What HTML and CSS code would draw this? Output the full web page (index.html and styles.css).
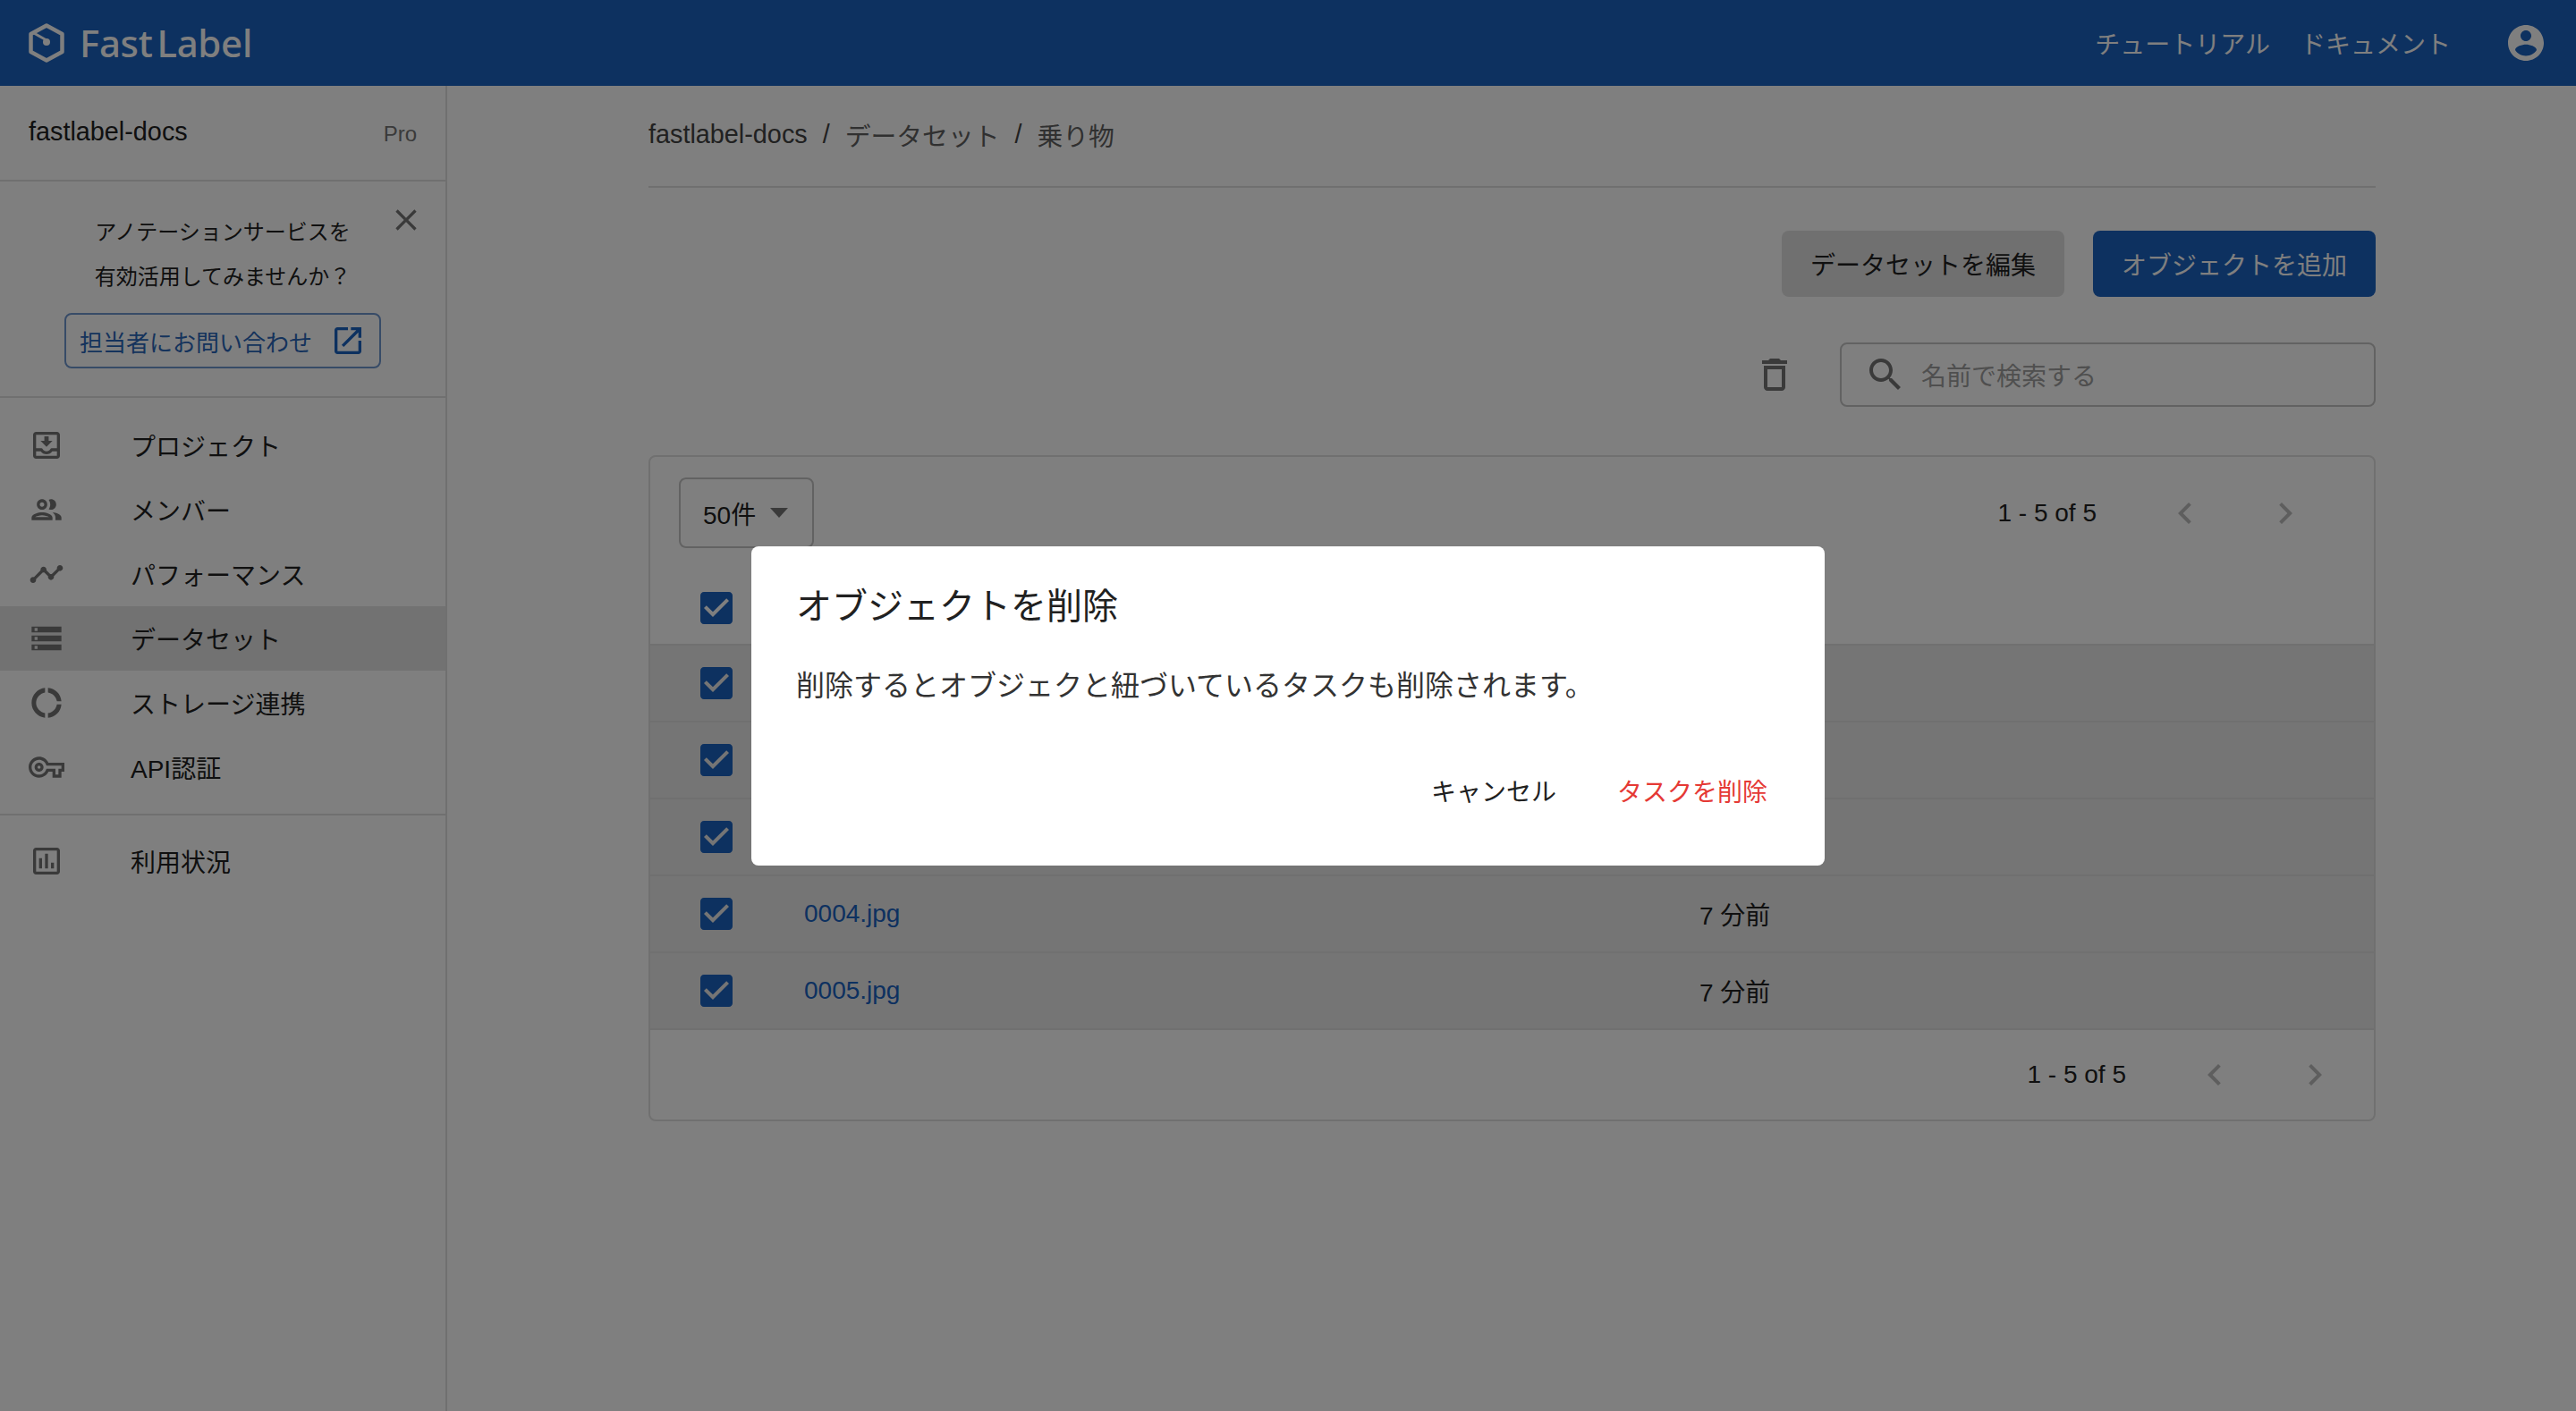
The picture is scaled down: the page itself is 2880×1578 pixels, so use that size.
FILE: index.html
```html
<!DOCTYPE html>
<html lang="ja">

<head>
    <meta charset="UTF-8">
    <meta name="viewport" content="width=device-width, initial-scale=1.0">
    <title>FastLabel</title>
    <link rel="stylesheet" href="styles.css">
</head>

<body>
    <div class="header">
        <div class="logo">
            <svg class="logo-mark" viewBox="0 0 40 44">
                <path d="M20 2.5 37.5 12v20L20 41.5 2.500 32V12z" fill="none" stroke="#fff" stroke-width="4.500" stroke-linejoin="round"/>
                <path d="M5 10.500 20 19" fill="none" stroke="#fff" stroke-width="3"/>
                <circle cx="20" cy="21" r="4" fill="#fff"/>
            </svg>
            <span class="logo-text">Fast<span class="logo-gap">Label</span></span>
        </div>
        <div class="header-right">
            <a class="header-link" href="#">チュートリアル</a>
            <a class="header-link" href="#">ドキュメント</a>
            <svg class="icon-avatar" viewBox="0 0 24 24"><path d="M12 2C6.48 2 2 6.48 2 12s4.48 10 10 10 10-4.48 10-10S17.52 2 12 2zm0 3c1.66 0 3 1.34 3 3s-1.34 3-3 3-3-1.34-3-3 1.34-3 3-3zm0 14.2c-2.5 0-4.71-1.28-6-3.22.03-1.99 4-3.08 6-3.08 1.99 0 5.97 1.09 6 3.08-1.29 1.94-3.5 3.22-6 3.22z"/></svg>
        </div>
    </div>

    <div class="main">
        <div class="sidebar">
            <div class="team">
                <span class="team-name">fastlabel-docs</span>
                <span class="team-plan">Pro</span>
            </div>

            <div class="promo">
                <svg class="promo-close" viewBox="0 0 24 24"><path d="M19 6.410 17.590 5 12 10.590 6.410 5 5 6.410 10.590 12 5 17.590 6.410 19 12 13.410 17.590 19 19 17.590 13.410 12z"/></svg>
                <p class="promo-text">アノテーションサービスを</p>
                <p class="promo-text">有効活用してみませんか？</p>
                <a class="promo-button" href="#">
                    担当者にお問い合わせ
                    <svg class="icon" viewBox="0 0 24 24"><path d="M19 19H5V5h7V3H5c-1.110 0-2 .9-2 2v14c0 1.100.89 2 2 2h14c1.100 0 2-.9 2-2v-7h-2v7zM14 3v2h3.590l-9.830 9.830 1.410 1.410L19 6.410V10h2V3h-7z"/></svg>
                </a>
            </div>

            <div class="nav">
                <a class="nav-item" href="#">
                    <svg class="icon" viewBox="0 0 24 24"><path fill-rule="evenodd" d="M19 3H5c-1.100 0-2 .9-2 2v14c0 1.100.9 2 2 2h14c1.100 0 2-.9 2-2V5c0-1.100-.9-2-2-2zm0 11h-3.560c-.36 0-.68.19-.86.5-.52.9-1.470 1.500-2.580 1.500s-2.060-.6-2.580-1.500c-.18-.31-.5-.5-.86-.5H5V5h14v9zM5 19v-3h3.100c.7 1.200 2.400 2 3.900 2s3.200-.8 3.900-2H19v3H5z"/><path d="M16 9h-2.550V6h-2.900v3H8l4 4z"/></svg>
                    プロジェクト
                </a>
                <a class="nav-item" href="#">
                    <svg class="icon" viewBox="0 0 24 24"><path d="M9 13.750c-2.340 0-7 1.170-7 3.500V19h14v-1.750c0-2.330-4.660-3.500-7-3.500zM4.340 17c.84-.58 2.870-1.250 4.660-1.250s3.820.67 4.660 1.250H4.340zM9 12c1.930 0 3.500-1.570 3.500-3.500S10.930 5 9 5 5.500 6.570 5.500 8.500 7.070 12 9 12zm0-5c.83 0 1.500.67 1.500 1.500S9.830 10 9 10s-1.500-.67-1.500-1.500S8.170 7 9 7zm7.040 6.810c1.160.84 1.960 1.960 1.960 3.440V19h4v-1.750c0-2.020-3.500-3.170-5.960-3.440zM15 12c1.930 0 3.500-1.570 3.500-3.500S16.930 5 15 5c-.54 0-1.040.13-1.500.35.63.89 1 1.980 1 3.150s-.37 2.260-1 3.150c.46.22.96.35 1.500.35z"/></svg>
                    メンバー
                </a>
                <a class="nav-item" href="#">
                    <svg class="icon" viewBox="0 0 24 24"><path d="M23 8c0 1.100-.9 2-2 2-.18 0-.35-.02-.51-.07l-3.560 3.550c.05.16.07.34.07.52 0 1.100-.9 2-2 2s-2-.9-2-2c0-.18.02-.36.07-.52l-2.550-2.550c-.16.05-.34.07-.52.07s-.36-.02-.52-.07l-4.550 4.560c.05.16.07.33.07.51 0 1.100-.9 2-2 2s-2-.9-2-2 .9-2 2-2c.18 0 .35.02.51.07l4.560-4.550C8.020 9.360 8 9.180 8 9c0-1.100.9-2 2-2s2 .9 2 2c0 .18-.02.36-.07.52l2.550 2.550c.16-.05.34-.07.52-.07s.36.02.52.07l3.550-3.560C19.020 8.350 19 8.180 19 8c0-1.100.9-2 2-2s2 .9 2 2z"/></svg>
                    パフォーマンス
                </a>
                <a class="nav-item active" href="#">
                    <svg class="icon" viewBox="0 0 24 24"><path d="M2 20h20v-4H2v4zm2-3h2v2H4v-2zM2 4v4h20V4H2zm4 3H4V5h2v2zm-4 7h20v-4H2v4zm2-3h2v2H4v-2z"/></svg>
                    データセット
                </a>
                <a class="nav-item" href="#">
                    <svg class="icon" viewBox="0 0 24 24"><path d="M11 5.080V2c-5 .5-9 4.810-9 10s4 9.500 9 10v-3.080c-3-.48-6-3.400-6-6.920s3-6.440 6-6.920zM18.970 11H22c-.47-5-4-8.530-9-9v3.080C16 5.510 18.540 8 18.970 11zM13 18.920V22c5-.47 8.530-4 9-9h-3.030c-.43 3-2.970 5.490-5.970 5.920z"/></svg>
                    ストレージ連携
                </a>
                <a class="nav-item" href="#">
                    <svg class="icon" viewBox="0 0 24 24"><path d="M22 19h-6v-4h-2.680c-1.140 2.420-3.600 4-6.320 4-3.860 0-7-3.140-7-7s3.140-7 7-7c2.720 0 5.170 1.580 6.320 4H24v6h-2v4zm-4-2h2v-4h2v-2H11.940l-.23-.67C11.010 8.340 9.110 7 7 7c-2.760 0-5 2.240-5 5s2.240 5 5 5c2.110 0 4.010-1.340 4.710-3.330l.23-.67H18v4zM7 15c-1.650 0-3-1.350-3-3s1.350-3 3-3 3 1.350 3 3-1.350 3-3 3zm0-4c-.55 0-1 .45-1 1s.45 1 1 1 1-.45 1-1-.45-1-1-1z"/></svg>
                    API認証
                </a>
            </div>

            <div class="nav nav-last">
                <a class="nav-item" href="#">
                    <svg class="icon" viewBox="0 0 24 24"><path d="M19 3H5c-1.100 0-2 .9-2 2v14c0 1.100.9 2 2 2h14c1.100 0 2-.9 2-2V5c0-1.100-.9-2-2-2zm0 16H5V5h14v14zM7 10h2v7H7zm4-3h2v10h-2zm4 6h2v4h-2z"/></svg>
                    利用状況
                </a>
            </div>
        </div>

        <div class="content">
            <div class="breadcrumb">
                <span>fastlabel-docs</span>
                <span class="crumb-sep">/</span>
                <span class="crumb">データセット</span>
                <span class="crumb-sep">/</span>
                <span class="crumb">乗り物</span>
            </div>

            <div class="actions">
                <button class="button">データセットを編集</button>
                <button class="button button-primary">オブジェクトを追加</button>
            </div>

            <div class="search-row">
                <svg class="icon-large" viewBox="0 0 24 24"><path d="M6 19c0 1.100.9 2 2 2h8c1.100 0 2-.9 2-2V7H6v12zM8 9h8v10H8V9zm7.500-5l-1-1h-5l-1 1H5v2h14V4z"/></svg>
                <div class="search">
                    <svg class="icon-large" viewBox="0 0 24 24"><path d="M15.500 14h-.79l-.28-.27C15.410 12.590 16 11.110 16 9.500 16 5.910 13.090 3 9.500 3S3 5.910 3 9.500 5.910 16 9.500 16c1.610 0 3.090-.59 4.230-1.570l.27.28v.79l5 4.990L20.490 19l-4.990-5zm-6 0C7.010 14 5 11.990 5 9.500S7.010 5 9.500 5 14 7.010 14 9.500 11.990 14 9.500 14z"/></svg>
                    <span class="search-placeholder">名前で検索する</span>
                </div>
            </div>

            <div class="card">
                <div class="card-top">
                    <div class="select">50件<span class="select-arrow"></span></div>
                    <div class="pager pager-top">
                        <span>1 - 5 of 5</span>
                        <div class="pager-buttons">
                            <svg class="icon-large" viewBox="0 0 24 24"><path d="M15.410 7.410 14 6l-6 6 6 6 1.410-1.410L10.830 12z"/></svg>
                            <svg class="icon-large" viewBox="0 0 24 24"><path d="M10 6 8.590 7.410 13.170 12l-4.580 4.590L10 18l6-6z"/></svg>
                        </div>
                    </div>
                </div>

                <div class="row row-head">
                    <svg class="check" viewBox="0 0 24 24"><path d="M19 3H5c-1.110 0-2 .9-2 2v14c0 1.100.89 2 2 2h14c1.110 0 2-.89 2-2V5c0-1.100-.89-2-2-2zm-9 14l-5-5 1.410-1.410L10 14.170l7.590-7.590L19 8l-9 9z"/></svg>
                </div>
                <div class="row">
                    <svg class="check" viewBox="0 0 24 24"><path d="M19 3H5c-1.110 0-2 .9-2 2v14c0 1.100.89 2 2 2h14c1.110 0 2-.89 2-2V5c0-1.100-.89-2-2-2zm-9 14l-5-5 1.410-1.410L10 14.170l7.590-7.590L19 8l-9 9z"/></svg>
                    <a class="file-name" href="#">0001.jpg</a>
                    <span>7 分前</span>
                </div>
                <div class="row">
                    <svg class="check" viewBox="0 0 24 24"><path d="M19 3H5c-1.110 0-2 .9-2 2v14c0 1.100.89 2 2 2h14c1.110 0 2-.89 2-2V5c0-1.100-.89-2-2-2zm-9 14l-5-5 1.410-1.410L10 14.170l7.590-7.590L19 8l-9 9z"/></svg>
                    <a class="file-name" href="#">0002.jpg</a>
                    <span>7 分前</span>
                </div>
                <div class="row">
                    <svg class="check" viewBox="0 0 24 24"><path d="M19 3H5c-1.110 0-2 .9-2 2v14c0 1.100.89 2 2 2h14c1.110 0 2-.89 2-2V5c0-1.100-.89-2-2-2zm-9 14l-5-5 1.410-1.410L10 14.170l7.590-7.590L19 8l-9 9z"/></svg>
                    <a class="file-name" href="#">0003.jpg</a>
                    <span>7 分前</span>
                </div>
                <div class="row">
                    <svg class="check" viewBox="0 0 24 24"><path d="M19 3H5c-1.110 0-2 .9-2 2v14c0 1.100.89 2 2 2h14c1.110 0 2-.89 2-2V5c0-1.100-.89-2-2-2zm-9 14l-5-5 1.410-1.410L10 14.170l7.590-7.590L19 8l-9 9z"/></svg>
                    <a class="file-name" href="#">0004.jpg</a>
                    <span>7 分前</span>
                </div>
                <div class="row">
                    <svg class="check" viewBox="0 0 24 24"><path d="M19 3H5c-1.110 0-2 .9-2 2v14c0 1.100.89 2 2 2h14c1.110 0 2-.89 2-2V5c0-1.100-.89-2-2-2zm-9 14l-5-5 1.410-1.410L10 14.170l7.590-7.590L19 8l-9 9z"/></svg>
                    <a class="file-name" href="#">0005.jpg</a>
                    <span>7 分前</span>
                </div>

                <div class="card-bottom">
                    <div class="pager pager-bottom">
                        <span>1 - 5 of 5</span>
                        <div class="pager-buttons">
                            <svg class="icon-large" viewBox="0 0 24 24"><path d="M15.410 7.410 14 6l-6 6 6 6 1.410-1.410L10.830 12z"/></svg>
                            <svg class="icon-large" viewBox="0 0 24 24"><path d="M10 6 8.590 7.410 13.170 12l-4.580 4.590L10 18l6-6z"/></svg>
                        </div>
                    </div>
                </div>
            </div>
        </div>
    </div>

    <div class="overlay">
        <div class="dialog">
            <h2 class="dialog-title">オブジェクトを削除</h2>
            <p class="dialog-text">削除するとオブジェクと紐づいているタスクも削除されます。</p>
            <div class="dialog-actions">
                <button class="dialog-button">キャンセル</button>
                <button class="dialog-button dialog-danger">タスクを削除</button>
            </div>
        </div>
    </div>
</body>

</html>
```

FILE: styles.css
```css
/* Global styles */
body {
    margin: 0;
    font-family: "Liberation Sans", "Noto Sans CJK JP", sans-serif;
    font-size: 28px;
    color: #212121;
    background-color: #fff;
}

a {
    color: inherit;
    text-decoration: none;
}

.icon {
    width: 40px;
    height: 40px;
    flex: none;
    fill: #757575;
}

.icon-large {
    width: 48px;
    height: 48px;
    flex: none;
    fill: #757575;
}

/* Header */
.header {
    height: 96px;
    padding: 0 32px;
    box-sizing: border-box;
    display: flex;
    align-items: center;
    justify-content: space-between;
    background-color: #1a62c0;
    color: #fff;
}

.logo {
    display: flex;
    align-items: center;
    gap: 17px;
}

.logo-mark {
    width: 40px;
    height: 44px;
}

.logo-text {
    font-family: "Noto Sans", sans-serif;
    font-weight: 500;
    font-size: 42px;
    line-height: 1;
    letter-spacing: -0.3px;
}

.logo-gap {
    margin-left: 5px;
}

.header-right {
    display: flex;
    align-items: center;
    gap: 34px;
}

.header-link {
    font-size: 28px;
}

.icon-avatar {
    width: 48px;
    height: 48px;
    margin-left: 26px;
    fill: #fff;
}

/* Sidebar */
.main {
    display: flex;
    min-height: 1482px;
}

.sidebar {
    width: 500px;
    flex: none;
    box-sizing: border-box;
    border-right: 2px solid #e0e0e0;
}

.team {
    height: 107px;
    box-sizing: border-box;
    padding: 0 32px 2px;
    display: flex;
    align-items: center;
    justify-content: space-between;
    border-bottom: 2px solid #e0e0e0;
}

.team-name {
    font-size: 28.800px;
}

.team-plan {
    font-size: 24px;
    color: #757575;
    margin-top: 4px;
}

.promo {
    position: relative;
    height: 242px;
    box-sizing: border-box;
    padding-top: 32px;
    display: flex;
    flex-direction: column;
    align-items: center;
    border-bottom: 2px solid #e0e0e0;
}

.promo-close {
    position: absolute;
    top: 23px;
    right: 24px;
    width: 40px;
    height: 40px;
    fill: #757575;
}

.promo-text {
    margin: 0;
    font-size: 24px;
    line-height: 50px;
}

.promo-button {
    margin-top: 15px;
    width: 354px;
    height: 62px;
    box-sizing: border-box;
    display: flex;
    align-items: center;
    justify-content: center;
    gap: 20px;
    font-size: 26px;
    color: #2a66b8;
    border: 2px solid #6f97cf;
    border-radius: 8px;
}

.promo-button .icon {
    fill: #1a62c0;
}

.nav {
    padding: 17px 0 16px;
    border-bottom: 2px solid #e0e0e0;
}

.nav-last {
    padding-top: 15px;
    border-bottom: none;
}

.nav-item {
    height: 72px;
    padding-left: 32px;
    display: flex;
    align-items: center;
    gap: 74px;
    font-size: 28px;
}

.nav-item.active {
    background-color: #e4e4e4;
}

/* Content */
.content {
    flex: 1;
    padding: 0 224px 0 225px;
}

.breadcrumb {
    height: 114px;
    box-sizing: border-box;
    padding-bottom: 4px;
    display: flex;
    align-items: center;
    gap: 17px;
    font-size: 28.800px;
    border-bottom: 2px solid #e0e0e0;
    color: #424242;
}

.crumb {
    color: #616161;
}

.actions {
    margin-top: 48px;
    display: flex;
    justify-content: flex-end;
    gap: 32px;
}

.button {
    width: 316px;
    height: 74px;
    padding: 0;
    border: none;
    border-radius: 8px;
    font-family: inherit;
    font-size: 28px;
    color: #212121;
    background-color: #e0e0e0;
}

.button-primary {
    background-color: #1a62c0;
    color: #fff;
}

.search-row {
    margin-top: 51px;
    display: flex;
    align-items: center;
    justify-content: flex-end;
    gap: 49px;
}

.search {
    width: 599px;
    height: 72px;
    box-sizing: border-box;
    padding-left: 25px;
    display: flex;
    align-items: center;
    gap: 16px;
    border: 2px solid #c4c4c4;
    border-radius: 8px;
}

.search-placeholder {
    color: #9e9e9e;
}

/* Table card */
.card {
    margin-top: 54px;
    border: 2px solid #e0e0e0;
    border-radius: 8px;
}

.card-top {
    height: 102px;
    padding: 23px 0 0 32px;
    box-sizing: border-box;
    display: flex;
    justify-content: space-between;
}

.select {
    width: 151px;
    height: 79px;
    box-sizing: border-box;
    padding-left: 25px;
    display: flex;
    align-items: center;
    gap: 16px;
    background-color: #fff;
    border: 2px solid #c4c4c4;
    border-radius: 8px;
}

.select-arrow {
    border-left: 10.500px solid transparent;
    border-right: 10.500px solid transparent;
    border-top: 11px solid #757575;
}

.pager {
    display: flex;
    align-items: center;
    gap: 75px;
}

.pager-top {
    height: 79px;
    padding-right: 75px;
}

.pager-buttons {
    display: flex;
    gap: 64px;
}

.pager .icon-large {
    fill: #bdbdbd;
}

.row {
    height: 86px;
    box-sizing: border-box;
    padding-left: 50px;
    display: flex;
    align-items: center;
    border-bottom: 2px solid #e0e0e0;
    background-color: #ebebeb;
}

.row-head {
    height: 109px;
    padding-top: 26px;
    background-color: #fff;
}

.check {
    width: 48px;
    height: 48px;
    flex: none;
    fill: #1a62c0;
}

.file-name {
    width: 1001px;
    margin-left: 74px;
    color: #1a62c0;
}

.card-bottom {
    height: 100px;
    display: flex;
    justify-content: flex-end;
}

.pager-bottom {
    padding-right: 42px;
}

/* Dialog */
.overlay {
    position: fixed;
    top: 0;
    left: 0;
    right: 0;
    bottom: 0;
    display: flex;
    align-items: center;
    justify-content: center;
    background-color: rgba(0, 0, 0, 0.5);
}

.dialog {
    width: 1200px;
    height: 357px;
    box-sizing: border-box;
    padding: 42px 50px 0;
    background-color: #fff;
    border-radius: 8px;
}

.dialog-title {
    margin: 0;
    font-size: 40px;
    font-weight: normal;
    line-height: 50px;
}

.dialog-text {
    margin: 40px 0 0;
    font-size: 32px;
    line-height: 48px;
    color: #333;
}

.dialog-actions {
    margin-top: 76px;
    display: flex;
    justify-content: flex-end;
    gap: 68px;
    padding-right: 14px;
}

.dialog-button {
    padding: 0;
    border: none;
    background: none;
    font-family: inherit;
    font-size: 28px;
    line-height: 40px;
    color: #212121;
}

.dialog-danger {
    color: #e53935;
}
```
